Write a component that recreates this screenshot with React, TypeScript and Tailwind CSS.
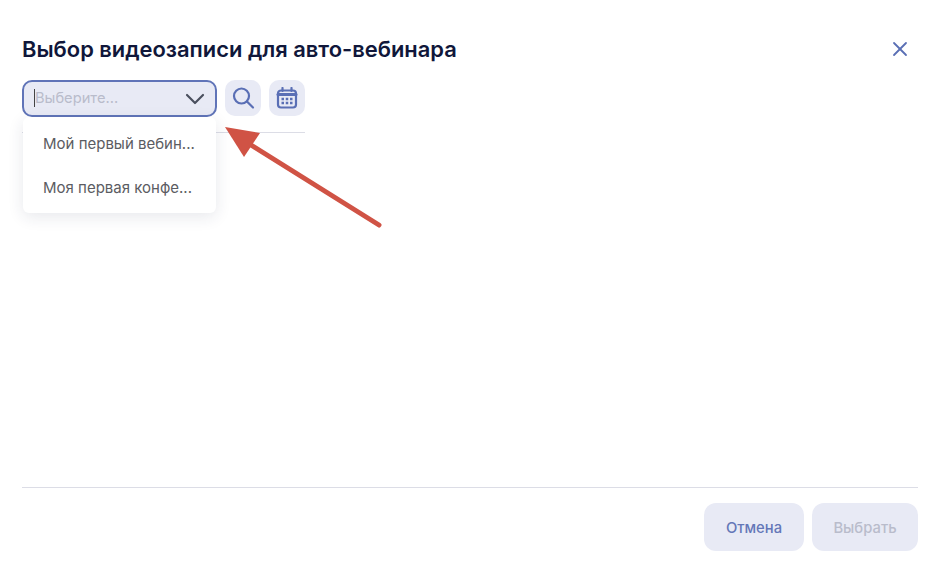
import { ChevronDown, X } from "lucide-react"

const options = ["Мой первый вебин...", "Моя первая конфе..."]

function SearchIcon() {
    return (
        <svg width="24" height="24" viewBox="0 0 24 24" fill="none" stroke="#5a6fb5" strokeWidth="2.2" strokeLinecap="round">
            <circle cx="10.5" cy="10" r="7.5" />
            <path d="M16 15.5 L22 21.5" />
        </svg>
    )
}

function CalendarIcon() {
    return (
        <svg width="22" height="22" viewBox="0 0 22 22" fill="none" stroke="#5a6fb5" strokeWidth="2.2" strokeLinecap="round">
            <rect x="2" y="3.5" width="18" height="17" rx="3" />
            <path d="M2 7.5 H20" strokeWidth="3" />
            <path d="M6.5 1 V4 M15.5 1 V4" />
            <path d="M5.5 12 H8 M9.75 12 H12.25 M14 12 H16.5 M5.5 16 H8 M9.75 16 H12.25 M14 16 H16.5" strokeWidth="2.6" strokeLinecap="butt" />
        </svg>
    )
}

export default function App() {
    return (
        <div className="relative w-[948px] h-[572px] bg-white flex flex-col pl-[22px] pr-[30px] overflow-hidden font-['Inter',sans-serif]">
            <div className="flex items-center justify-between h-[80px] pt-[18px] shrink-0">
                <h1 className="text-[21.9px] leading-[28px] font-semibold text-[#10173a]">Выбор видеозаписи для авто-вебинара</h1>
                <button className="mr-[6px] text-[#5a6fb5]">
                    <X size={24} strokeWidth={1.8} />
                </button>
            </div>

            <div className="w-[283px] border-b border-[#dcdde6] pb-[15px] flex-1 self-start max-h-[53px]">
                <div className="relative flex gap-2">
                    <div className="relative w-[195px] h-[37px] rounded-[10px] border-2 border-[#6074b8] bg-[#e8eaf5] flex items-center justify-between pl-[10px] pr-[4px]">
                        <div className="flex items-center">
                            <span className="w-px h-[18px] bg-[#444]" />
                            <span className="text-[14.7px] text-[#b9bccb]">Выберите...</span>
                        </div>
                        <ChevronDown size={32} strokeWidth={1.6} className="text-[#4a4f5e]" />
                    </div>
                    <button className="w-9 h-9 rounded-[10px] bg-[#e8eaf5] flex items-center justify-center">
                        <SearchIcon />
                    </button>
                    <button className="w-9 h-9 rounded-[10px] bg-[#e8eaf5] flex items-center justify-center">
                        <CalendarIcon />
                    </button>
                    <div className="absolute left-[1px] top-[37px] w-[193px] h-[96px] rounded-[6px] bg-white shadow-[0_4px_16px_rgba(40,45,80,0.11)] pt-[5px] z-10">
                        {options.map((o) => (
                            <div key={o} className="h-[44px] pl-[20px] flex items-center text-[15px] text-[#5b5c62]">{o}</div>
                        ))}
                    </div>
                </div>
            </div>

            <div className="flex-1" />

            <div className="border-t border-[#dcdde6] h-[85px] shrink-0 flex justify-end gap-2 pt-[15px]">
                <button className="w-[100px] h-[48px] rounded-[12px] bg-[#e8eaf5] pt-[2px] text-[14.8px] font-medium text-[#6477b8]">Отмена</button>
                <button className="w-[106px] h-[48px] rounded-[12px] bg-[#e8eaf5] pt-[2px] text-[14.8px] font-medium text-[#b9bccb]">Выбрать</button>
            </div>

            <svg className="absolute left-[220px] top-[120px] z-20" width="170" height="115" viewBox="220 120 170 115" fill="none">
                <path d="M379 225 L243 140" stroke="#d05345" strokeWidth="5" strokeLinecap="round" />
                <path d="M225 127 L260 133 L244 157 Z" fill="#d05345" />
            </svg>
        </div>
    )
}
